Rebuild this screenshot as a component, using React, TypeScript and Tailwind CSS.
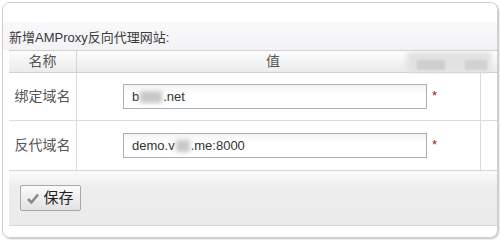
import React from "react";

const font = { fontFamily: '"Liberation Sans", "Noto Sans CJK SC", sans-serif' };

function Blur({ w }: { w: number }) {
  return (
    <span
      className="inline-block h-[12px] bg-[#c8c8c8] blur-[2px] align-middle mx-[1px]"
      style={{ width: w }}
    />
  );
}

function Row({ label, children, last }: { label: string; children: React.ReactNode; last?: boolean }) {
  return (
    <div className={`grid grid-cols-[68px_404px_1fr] ${last ? "h-[49px]" : "h-[48px] border-b border-[#dcdcdc]"}`}>
      <div className="border-r border-[#dcdcdc] flex items-center justify-center text-[14px] text-[#555]">
        {label}
      </div>
      <div className="border-r border-[#dcdcdc] flex items-center pl-[46px]">
        <div className="w-[304px] h-[25px] border border-[#a9b0b8] bg-gradient-to-b from-[#f4f4f4] to-white to-[40%] flex items-center pl-[8px] text-[13px] text-[#333]">
          {children}
        </div>
        <span className="ml-[5px] text-[#a02020] text-[13px] -mt-[2px]">*</span>
      </div>
      <div />
    </div>
  );
}

export default function App() {
  return (
    <div className="w-[500px] h-[240px] bg-white pt-[2px] pl-[2px] pr-[2px]" style={font}>
      <div className="h-[236px] border border-[#cfcfcf] rounded-[8px] shadow-[1px_1px_2px_rgba(0,0,0,0.25)] flex flex-col overflow-hidden">
        <div className="h-[19px] bg-white" />
        <div className="h-[28px] bg-gradient-to-b from-[#f9f9fb] to-[#f3f3f6] flex items-end pl-[6px] pb-[3px] text-[13px] text-[#3a3a3a]">
          新增AMProxy反向代理网站:
        </div>
        <div className="ml-[6px] flex flex-col">
          <div className="grid grid-cols-[68px_404px_1fr] h-[23px] border-t border-b border-[#d0d0d0] bg-gradient-to-b from-[#fdfdfd] to-[#ebebeb]">
            <div className="border-r border-[#d4d4d4] flex items-center justify-center text-[14px] text-[#555]">
              名称
            </div>
            <div className="flex items-center relative">
              <span className="ml-[189px] text-[14px] text-[#555]">值</span>
              <div className="absolute left-[330px] top-[1px] w-[84px] h-[20px] bg-[#e2e2e2] blur-[2px]" />
              <div className="absolute left-[340px] top-[9px] w-[28px] h-[10px] bg-[#cfcfcf] blur-[1px]" />
              <div className="absolute left-[388px] top-[9px] w-[22px] h-[10px] bg-[#d2d2d2] blur-[1px]" />
            </div>
            <div />
          </div>
          <Row label="绑定域名">
            b<Blur w={22} />.net
          </Row>
          <Row label="反代域名" last>
            demo.v<Blur w={14} />.me:8000
          </Row>
        </div>
        <div className="ml-[6px] h-[56px] border-t border-b border-[#d6d6d6] bg-gradient-to-b from-[#fbfbfb] via-[#ededed] via-[30%] to-[#ebebeb] flex items-center pl-[11px]">
          <button className="w-[61px] h-[26px] border border-[#a8a8a8] rounded-[2px] bg-gradient-to-b from-[#fbfbfb] to-[#e2e2e2] flex items-center justify-center gap-[4px] text-[15px] text-[#222]">
            <svg width="12" height="11" viewBox="0 0 12 11">
              <path d="M1 6 L4.5 9.5 L11 1.5" stroke="#8a8a8a" strokeWidth="2.6" fill="none" strokeLinejoin="round" />
            </svg>
            保存
          </button>
        </div>
      </div>
    </div>
  );
}
